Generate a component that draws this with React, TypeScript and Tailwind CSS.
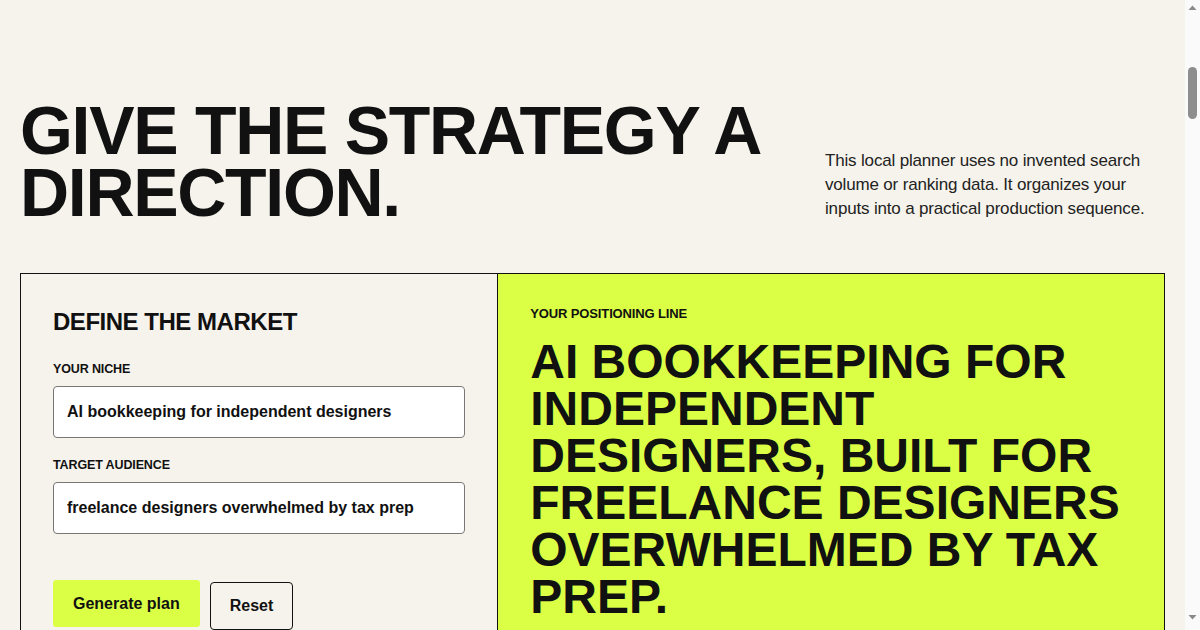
import React from "react";

const font = { fontFamily: '"Liberation Sans", Arial, Helvetica, sans-serif' };

function ScrollbarStrip() {
  return (
    <div className="w-[15px] shrink-0 h-screen bg-[#fafafa] flex flex-col items-center">
      <svg width="15" height="15" viewBox="0 0 15 15" className="shrink-0">
        <path d="M3.5 10 L7.5 5.5 L11.5 10 Z" fill="#8a8a8a" />
      </svg>
      <div className="mt-[52px] w-[9px] h-[52px] rounded-full bg-[#8d8d8d]" />
      <div className="flex-1" />
      <svg width="15" height="15" viewBox="0 0 15 15" className="shrink-0 mb-[5px]">
        <path d="M3.5 5 L7.5 9.5 L11.5 5 Z" fill="#8a8a8a" />
      </svg>
    </div>
  );
}

export default function App() {
  return (
    <div className="flex h-screen overflow-hidden bg-[#f6f3ec] text-[#111111]" style={font}>
      <main className="flex-1 min-w-0 px-5 pt-[99px] pb-24">
        <header className="flex items-end justify-between gap-10">
          <h1 className="text-[68px] leading-[62px] font-bold tracking-[-0.019em] uppercase">
            Give the strategy a
            <br />
            direction.
          </h1>
          <p className="w-[340px] shrink-0 mb-[2px] text-[17px] leading-6 tracking-[-0.01em] text-[#222222]">
            This local planner uses no invented search volume or ranking data. It organizes your inputs into a practical production sequence.
          </p>
        </header>

        <section className="mt-[50px] grid grid-cols-[5fr_7fr] border border-[#111111]">
          <div className="p-8">
            <h2 className="text-2xl leading-8 font-bold tracking-[-0.02em] uppercase mb-[23px]">Define the market</h2>

            <label className="block text-[12.5px] leading-4 font-bold uppercase tracking-[-0.01em] mb-[9px]">Your niche</label>
            <input
              defaultValue="AI bookkeeping for independent designers"
              className="block w-full h-[52px] px-[13px] bg-white border border-[#777777] rounded-[4px] text-base font-bold text-[#111111] outline-none"
              style={font}
            />

            <label className="block mt-[19px] text-[12.5px] leading-4 font-bold uppercase tracking-[-0.01em] mb-[9px]">Target audience</label>
            <input
              defaultValue="freelance designers overwhelmed by tax prep"
              className="block w-full h-[52px] px-[13px] bg-white border border-[#777777] rounded-[4px] text-base font-bold text-[#111111] outline-none"
              style={font}
            />

            <div className="mt-[46px] flex items-start gap-[10px]">
              <button
                className="h-[47px] px-5 rounded-[3px] bg-[#dbff45] text-base font-bold text-[#111111]"
                style={font}
              >
                Generate plan
              </button>
              <button
                className="mt-[2px] h-12 px-[19px] rounded-[4px] border border-[#111111] bg-transparent text-base font-bold text-[#111111]"
                style={font}
              >
                Reset
              </button>
            </div>
          </div>

          <div className="border-l border-[#111111] bg-[#dbff45] p-8">
            <p className="text-[13px] leading-[15px] font-bold uppercase tracking-[-0.01em]">Your positioning line</p>
            <h3 className="mt-[17px] text-[48px] leading-[47px] font-bold uppercase">
              AI bookkeeping for independent designers, built for freelance designers overwhelmed by tax prep.
            </h3>
            <div className="mt-10 border-t border-[#111111] pt-6">
              <p className="text-[13px] font-bold uppercase">Production sequence</p>
              <ol className="mt-4 flex flex-col gap-3 text-base">
                <li>01 — Publish a cornerstone guide for the core problem.</li>
                <li>02 — Answer the questions the audience asks before buying.</li>
                <li>03 — Compare options and show the practical workflow.</li>
                <li>04 — Turn the best pages into a repeatable checklist.</li>
              </ol>
            </div>
          </div>
        </section>
      </main>
      <ScrollbarStrip />
    </div>
  );
}
